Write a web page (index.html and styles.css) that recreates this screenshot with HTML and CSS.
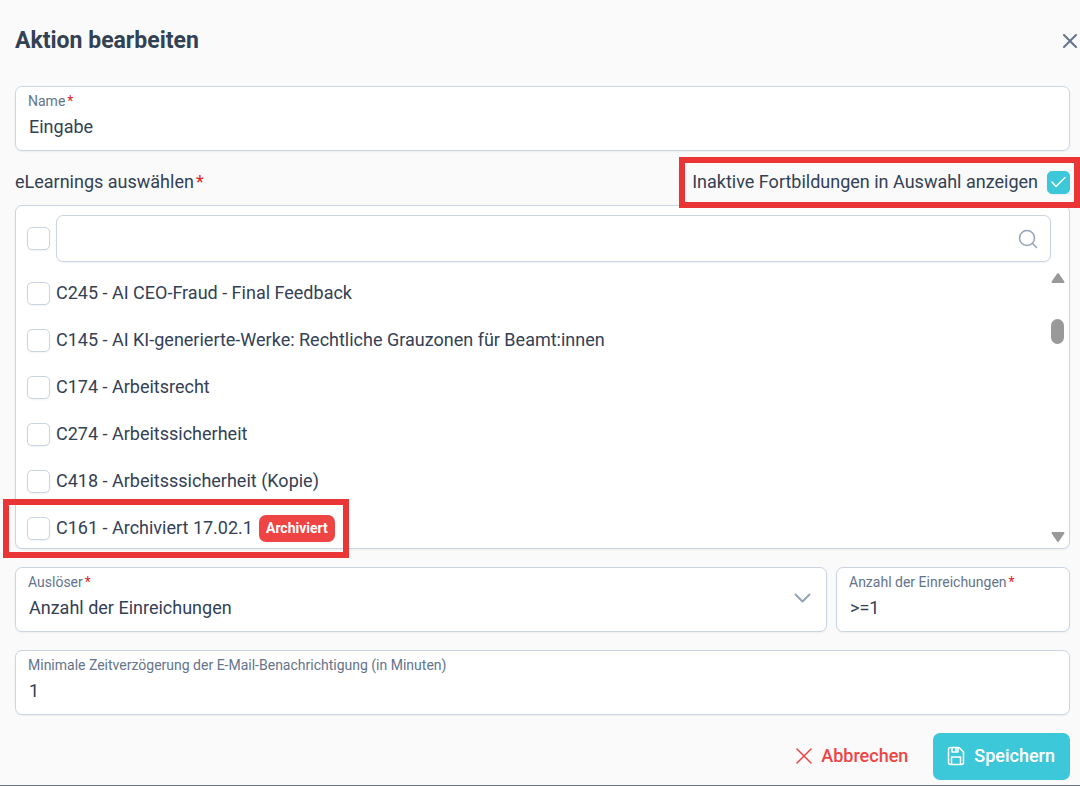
FILE: index.html
```html
<!DOCTYPE html>
<html lang="de">
<head>
    <meta charset="UTF-8">
    <meta name="viewport" content="width=device-width, initial-scale=1.0">
    <title>Aktion bearbeiten</title>
    <link rel="stylesheet" href="styles.css">
</head>
<body>
    <form class="dialog">
        <header class="dialog-header">
            <h1>Aktion bearbeiten</h1>
            <button type="button" class="close" aria-label="Schließen">
                <svg width="14" height="14" viewBox="0 0 14 14"><path d="M1 1l12 12M13 1L1 13"/></svg>
            </button>
        </header>

        <div class="field">
            <label for="name">Name<span class="required">*</span></label>
            <input id="name" type="text" value="Eingabe">
        </div>

        <div class="section-head">
            <span>eLearnings auswählen<span class="required">*</span></span>
            <div class="toggle marked">
                <label for="inactive">Inaktive Fortbildungen in Auswahl anzeigen</label>
                <span class="check">
                    <input id="inactive" type="checkbox" checked>
                    <svg class="tick" width="16" height="12" viewBox="0 0 16 12"><path d="M1 6l4 4.500L14 1.500"/></svg>
                </span>
            </div>
        </div>

        <div class="listbox">
            <div class="filter">
                <input type="checkbox" aria-label="Alle auswählen">
                <div class="search">
                    <input type="text" aria-label="Suchen">
                    <svg width="20" height="20" viewBox="0 0 20 20"><circle cx="9" cy="9" r="7.500"/><path d="M14.500 14.500l4 4"/></svg>
                </div>
            </div>
            <div class="list-body">
                <ul class="items">
                    <li><input type="checkbox" id="c245"><label for="c245">C245 - AI CEO-Fraud - Final Feedback</label></li>
                    <li><input type="checkbox" id="c145"><label for="c145">C145 - AI KI-generierte-Werke: Rechtliche Grauzonen für Beamt:innen</label></li>
                    <li><input type="checkbox" id="c174"><label for="c174">C174 - Arbeitsrecht</label></li>
                    <li><input type="checkbox" id="c274"><label for="c274">C274 - Arbeitssicherheit</label></li>
                    <li><input type="checkbox" id="c418"><label for="c418">C418 - Arbeitsssicherheit (Kopie)</label></li>
                    <li class="marked archived"><input type="checkbox" id="c161"><label for="c161">C161 - Archiviert 17.02.1</label><span class="badge">Archiviert</span></li>
                </ul>
                <div class="scrollbar">
                    <svg width="14" height="12" viewBox="0 0 14 12"><path d="M7 2L12.500 10H1.500z"/></svg>
                    <div class="track"><div class="thumb"></div></div>
                    <svg width="14" height="12" viewBox="0 0 14 12"><path d="M7 10L12.500 2H1.500z"/></svg>
                </div>
            </div>
        </div>

        <div class="row">
            <div class="field field-select">
                <div class="field-main">
                    <label for="trigger">Auslöser<span class="required">*</span></label>
                    <select id="trigger">
                        <option>Anzahl der Einreichungen</option>
                    </select>
                </div>
                <svg width="17" height="10" viewBox="0 0 17 10"><path d="M1.500 1.500l7 7 7-7"/></svg>
            </div>
            <div class="field">
                <label for="count">Anzahl der Einreichungen<span class="required">*</span></label>
                <input id="count" type="text" value="&gt;=1">
            </div>
        </div>

        <div class="field">
            <label for="delay">Minimale Zeitverzögerung der E-Mail-Benachrichtigung (in Minuten)</label>
            <input id="delay" type="text" value="1">
        </div>

        <footer class="actions">
            <button type="button" class="btn btn-cancel">
                <svg width="16" height="16" viewBox="0 0 16 16"><path d="M1 1l14 14M15 1L1 15"/></svg>
                Abbrechen
            </button>
            <button type="submit" class="btn btn-save">
                <svg width="18" height="20" viewBox="0 0 18 20"><path d="M3.500 1.500H12L16.500 6v10.500a2 2 0 0 1-2 2h-11a2 2 0 0 1-2-2v-13a2 2 0 0 1 2-2zM4.500 18.500V11h9v7.500M5 1.500V6h6V1.500M9 2v2.500"/></svg>
                Speichern
            </button>
        </footer>
    </form>
</body>
</html>
```
FILE: styles.css
```css
* {
    box-sizing: border-box;
}

body {
    margin: 0;
    background: #FAFAFA;
    color: #334155;
    font-family: Roboto, "Liberation Sans", sans-serif;
    font-size: 18px;
}

input,
select,
button {
    font: inherit;
    color: inherit;
}

svg {
    fill: none;
    stroke: currentColor;
    stroke-linecap: round;
    stroke-linejoin: round;
    flex: none;
}

.dialog {
    padding: 0 10px 5px 15px;
    border-bottom: 1px solid #64748B;
}

.dialog-header {
    display: flex;
    justify-content: space-between;
    align-items: center;
    height: 86px;
    margin-right: -7px;
    padding-bottom: 5px;
}

.dialog-header h1 {
    margin: 0;
    font-size: 23px;
    font-weight: 700;
}

.close {
    display: flex;
    padding: 0;
    border: none;
    background: none;
    color: #64748B;
    stroke-width: 2;
    cursor: pointer;
}

.field,
.listbox,
.search {
    background: #FFF;
    border: 1px solid #CBD5E1;
    border-radius: 7px;
    box-shadow: 0 1px 2px rgba(18, 18, 23, 0.05);
}

.field {
    padding: 5px 12px 8px;
}

.field label {
    display: block;
    color: #64748B;
    font-size: 14px;
    line-height: 18px;
}

.field input,
.field select {
    display: block;
    width: 100%;
    height: 32px;
    padding: 0 1px;
    border: none;
    outline: none;
    background: none;
    appearance: none;
}

.required {
    margin-left: 2px;
    color: #E02424;
}

.section-head {
    display: flex;
    justify-content: space-between;
    align-items: center;
    height: 54px;
    padding-top: 8px;
}

.section-head > span,
.toggle label {
    padding-bottom: 2px;
}

.toggle {
    display: flex;
    align-items: center;
    gap: 9px;
}

/* red frames around the highlighted parts */
.marked {
    position: relative;
}

.marked::after {
    content: "";
    position: absolute;
    inset: -14px -10px -14px -13px;
    border: 6px solid #E93535;
    pointer-events: none;
}

input[type="checkbox"] {
    flex: none;
    width: 23px;
    height: 23px;
    margin: 0;
    border: 1px solid #CBD5E1;
    border-radius: 5px;
    background: #FFF;
    box-shadow: 0 1px 2px rgba(18, 18, 23, 0.05);
    appearance: none;
}

input[type="checkbox"]:checked {
    border-color: #3DC8D9;
    background: #3DC8D9;
}

.check {
    display: grid;
    place-items: center;
}

.check > * {
    grid-area: 1 / 1;
}

.tick {
    position: relative;
    color: #FFF;
    stroke-width: 1.5;
    pointer-events: none;
}

.listbox {
    padding: 9px 0 3px 11px;
}

.filter {
    display: flex;
    align-items: center;
    gap: 6px;
    padding-right: 18px;
}

.search {
    flex: 1;
    display: flex;
    align-items: center;
    height: 47px;
    padding: 0 12px;
    color: #94A3B8;
    stroke-width: 1.5;
}

.search input {
    flex: 1;
    border: none;
    outline: none;
    background: none;
    color: #334155;
}

.list-body {
    display: flex;
    padding-top: 10px;
}

.items {
    flex: 1;
    display: flex;
    flex-direction: column;
    gap: 19px;
    margin: 0;
    padding: 7px 0 3px;
    list-style: none;
}

.items li {
    display: flex;
    align-items: center;
    gap: 6px;
    height: 28px;
}

.items label {
    padding-bottom: 1px;
}

.items .archived {
    align-self: flex-start;
}

.archived::after {
    inset: -15px -14px -16px -24px;
}

.badge {
    padding: 0 7px;
    border-radius: 7px;
    background: #EF4444;
    color: #FFF;
    font-size: 14px;
    font-weight: 700;
    line-height: 27px;
}

.scrollbar {
    display: flex;
    flex-direction: column;
    width: 14px;
    margin: 0 4px 2px 0;
    color: #999;
}

.scrollbar svg {
    fill: currentColor;
    stroke-width: 2;
}

.track {
    flex: 1;
    padding: 35px 1px 0 0;
}

.thumb {
    width: 13px;
    height: 25px;
    border-radius: 7px;
    background: #999;
}

.row {
    display: grid;
    grid-template-columns: 812fr 234fr;
    gap: 9px;
}

.row,
.row + .field,
.actions {
    margin-top: 18px;
}

.field-select {
    display: flex;
    align-items: center;
    padding-right: 15px;
}

.field-main {
    flex: 1;
}

.field-select svg {
    color: #94A3B8;
    stroke-width: 2;
}

.actions {
    display: flex;
    justify-content: flex-end;
    gap: 10px;
}

.btn {
    display: flex;
    align-items: center;
    gap: 9px;
    height: 47px;
    padding: 0 15px 2px 14px;
    border: none;
    border-radius: 7px;
    font-weight: 500;
    cursor: pointer;
}

.btn-cancel {
    background: none;
    color: #EF4444;
    stroke-width: 1.5;
}

.btn-save {
    background: #3DC8D9;
    color: #FFF;
    stroke-width: 1.5;
}
```
